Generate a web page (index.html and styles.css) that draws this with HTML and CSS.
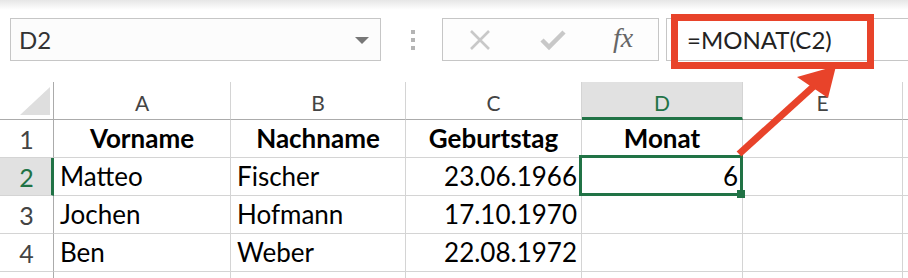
FILE: index.html
```html
<!DOCTYPE html>
<html lang="de">
<head>
  <meta charset="UTF-8" />
  <title>MONAT-Funktion</title>
  <link rel="stylesheet" href="styles.css">
</head>
<body>
  <!-- Formula bar -->
  <header class="formula-bar">
    <div class="name-box">
      <span>D2</span>
      <span class="dropdown"></span>
    </div>
    <div class="grip"><i></i><i></i><i></i></div>
    <div class="buttons">
      <svg class="icon" width="24" height="20" viewBox="0 0 24 20">
        <path d="M3 1 L21 19 M21 1 L3 19" stroke="#c8c8c8" stroke-width="2.6" fill="none"/>
      </svg>
      <svg class="icon" width="26" height="22" viewBox="0 0 26 22">
        <path d="M2 11 L9 18 L24 3" stroke="#c8c8c8" stroke-width="4.5" fill="none"/>
      </svg>
      <span class="fx">fx</span>
    </div>
    <div class="formula">
      <span class="formula-text">=MONAT(C2)</span>
    </div>
  </header>

  <!-- Sheet -->
  <main class="sheet">
    <div class="hd corner"></div>
    <div class="hd col">A</div>
    <div class="hd col">B</div>
    <div class="hd col">C</div>
    <div class="hd col active">D</div>
    <div class="hd col">E</div>
    <div class="hd col"></div>

    <div class="hd row">1</div>
    <div class="cell bold center">Vorname</div>
    <div class="cell bold center">Nachname</div>
    <div class="cell bold center">Geburtstag</div>
    <div class="cell bold center">Monat</div>
    <div class="cell"></div>
    <div class="cell"></div>

    <div class="hd row active">2</div>
    <div class="cell">Matteo</div>
    <div class="cell">Fischer</div>
    <div class="cell right">23.06.1966</div>
    <div class="cell right selected">6</div>
    <div class="cell"></div>
    <div class="cell"></div>

    <div class="hd row">3</div>
    <div class="cell">Jochen</div>
    <div class="cell">Hofmann</div>
    <div class="cell right">17.10.1970</div>
    <div class="cell"></div>
    <div class="cell"></div>
    <div class="cell"></div>

    <div class="hd row">4</div>
    <div class="cell">Ben</div>
    <div class="cell">Weber</div>
    <div class="cell right">22.08.1972</div>
    <div class="cell"></div>
    <div class="cell"></div>
    <div class="cell"></div>

    <div class="hd row"></div>
    <div class="cell"></div>
    <div class="cell"></div>
    <div class="cell"></div>
    <div class="cell"></div>
    <div class="cell"></div>
    <div class="cell"></div>
  </main>

  <!-- Annotation: red box and arrow -->
  <svg class="annotation" width="908" height="278" viewBox="0 0 908 278">
    <rect x="674.5" y="17.5" width="196" height="48" fill="none" stroke="#e8432a" stroke-width="7"/>
    <line x1="739" y1="154" x2="814" y2="86" stroke="#e8432a" stroke-width="7"/>
    <polygon points="836,66 797,77 828,98" fill="#e8432a"/>
  </svg>
</body>
</html>
```

FILE: styles.css
```css
* {
  margin: 0;
  padding: 0;
  box-sizing: border-box;
}

body {
  width: 908px;
  height: 278px;
  overflow: hidden;
  position: relative;
  background: #fff;
  font-family: 'Lato', 'Carlito', sans-serif;
  color: #000;
}

/* Formula bar */
.formula-bar {
  height: 82px;
  display: flex;
  align-items: flex-start;
  padding: 18px 0 0 10px;
  background: linear-gradient(#e6e6e6, #fff 10px);
}
.name-box {
  width: 371px;
  height: 43px;
  border: 1px solid #c6c6c6;
  background: #fcfcfc;
  display: flex;
  align-items: center;
  justify-content: space-between;
  padding: 0 11px 0 8px;
  font-size: 24px;
  color: #333;
}
.dropdown {
  width: 0;
  height: 0;
  border-left: 7px solid transparent;
  border-right: 7px solid transparent;
  border-top: 7px solid #777;
  margin-top: 2px;
}
.grip {
  width: 61px;
  height: 43px;
  display: flex;
  flex-direction: column;
  align-items: center;
  justify-content: center;
  gap: 4px;
  padding-left: 2px;
}
.grip i {
  width: 4px;
  height: 4px;
  background: #b4b4b4;
}
.buttons {
  width: 217px;
  height: 43px;
  border: 1px solid #c6c6c6;
  background: #fdfdfd;
  display: flex;
  align-items: center;
  padding-left: 25px;
  gap: 48px;
}
.fx {
  font-family: 'Liberation Serif', serif;
  font-style: italic;
  font-size: 28px;
  color: #666;
  margin-left: -1px;
  margin-top: -3px;
}
.formula {
  flex: 1;
  height: 43px;
  margin-left: 7px;
  border: 1px solid #c6c6c6;
  border-right: none;
  display: flex;
  align-items: center;
  padding-left: 20px;
  font-size: 24px;
  color: #222;
}

/* Sheet grid */
.sheet {
  display: grid;
  grid-template-columns: 54px 177px 175px 176px 161px 160px 1fr;
  grid-template-rows: 38px repeat(5, 38px);
}
.hd {
  font-size: 21px;
  color: #444;
  display: flex;
  align-items: flex-end;
  justify-content: center;
  border-right: 1px solid #d4d4d4;
  border-bottom: 1px solid #d4d4d4;
}
.hd.col {
  border-bottom-color: #ababab;
  padding-bottom: 4px;
}
.hd.col.active {
  background: #e1e1e1;
  color: #217346;
  border-bottom: 3px solid #217346;
  padding-bottom: 2px;
}
.corner {
  position: relative;
  border-right-color: #ababab;
  border-bottom-color: #ababab;
}
.corner::after {
  content: "";
  position: absolute;
  left: 20px;
  top: 5px;
  width: 30px;
  height: 28px;
  background: #dedede;
  clip-path: polygon(100% 0, 100% 100%, 0 100%);
}
.hd.row {
  font-size: 25px;
  align-items: center;
  border-right-color: #ababab;
}
.hd.row.active {
  background: #e1e1e1;
  color: #217346;
  border-right: 3px solid #217346;
  padding-left: 2px;
}
.cell {
  position: relative;
  font-size: 26px;
  line-height: 37px;
  padding: 0 6px;
  white-space: nowrap;
  border-right: 1px solid #d4d4d4;
  border-bottom: 1px solid #d4d4d4;
}
.bold { font-weight: 700; }
.center { text-align: center; }
.right { text-align: right; padding-right: 4px; }

/* Active cell */
.cell.selected::after {
  content: "";
  position: absolute;
  inset: -3px -1px -1px -3px;
  border: 3px solid #217346;
}
.cell.selected::before {
  content: "";
  position: absolute;
  right: -3px;
  bottom: -3px;
  width: 8px;
  height: 8px;
  background: #217346;
  z-index: 1;
}

.annotation {
  position: absolute;
  left: 0;
  top: 0;
  pointer-events: none;
}
```
